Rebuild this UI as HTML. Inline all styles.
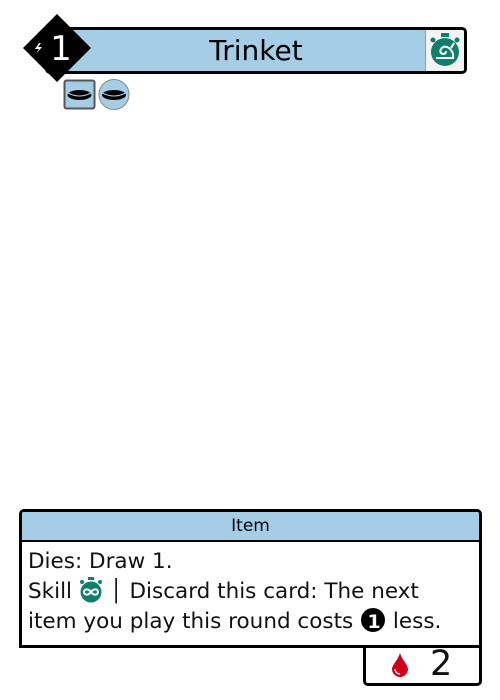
<!DOCTYPE html>
<html><head><style>
body{margin:0;width:500px;height:700px;background:#fff;position:relative;font-family:"DejaVu Sans","Liberation Sans",sans-serif;overflow:hidden}
.abs{position:absolute}
</style></head><body>
<div class="abs" style="left:45px;top:27px;width:416px;height:41px;border:3px solid #000;border-radius:5px;background:#a6cde6;overflow:hidden">
 <div class="abs" style="left:377px;top:0;width:39px;height:41px;background:#f3f3f3;border-left:1px solid #999"></div>
 <div class="abs" style="left:0;right:0;top:0;height:41px;line-height:41px;text-align:center;font-size:28px;color:#000">Trinket</div>
</div>
<svg class="abs" style="left:427px;top:32px" width="36" height="36" viewBox="0 0 36 36">
 <rect x="14" y="1" width="8" height="4" fill="#0f7f6b"/>
 <circle cx="6" cy="8" r="2.5" fill="#0f7f6b"/><circle cx="30" cy="8" r="2.5" fill="#0f7f6b"/>
 <circle cx="18" cy="20" r="14" fill="#0f7f6b"/>
 <path d="M9 26 L26 26 Q27 20 22 16 Q17 13 14 17 Q12 21 16 22 Q19 22 19 19 M24 16 L27 11" stroke="#fff" stroke-width="2" fill="none"/>
</svg>
<svg class="abs" style="left:22px;top:13px" width="70" height="70" viewBox="0 0 70 70">
 <polygon points="35,1 69,35 35,69 1,35" fill="#000"/>
 <path d="M17 30 L13 36 L17 36 L14 41 L20 34 L16 34 L19 30Z" fill="#fff"/>
 <text x="39" y="47" font-family="DejaVu Sans,sans-serif" font-size="34" fill="#fff" text-anchor="middle">1</text>
</svg>
<svg class="abs" style="left:63px;top:79px" width="70" height="32" viewBox="0 0 70 32">
 <rect x="1.5" y="1.5" width="30" height="28" rx="2" fill="#a6cde6" stroke="#555" stroke-width="2"/>
 <ellipse cx="16.5" cy="16" rx="12" ry="5" fill="#000"/><path d="M5 14 Q16.5 20 28 14" stroke="#a6cde6" fill="none"/>
 <circle cx="51" cy="15.5" r="15" fill="#a6cde6" stroke="#888" stroke-width="1"/>
 <ellipse cx="51" cy="16" rx="12" ry="5" fill="#000"/><path d="M39.5 14 Q51 20 62.5 14" stroke="#a6cde6" fill="none"/>
</svg>
<div class="abs" style="left:19px;top:509px;width:457px;height:133px;border:3px solid #000;border-radius:5px 5px 0 0;overflow:hidden">
 <div style="height:28px;background:#a6cde6;border-bottom:2px solid #000;text-align:center;line-height:28px;font-size:17px">Item</div>
 <div style="padding:5px 0 0 6px;font-size:21.5px;line-height:30px;color:#111;white-space:nowrap">Dies: Draw 1.<br>Skill <svg width="24" height="26" viewBox="0 0 24 26" style="vertical-align:-5px"><rect x="9" y="0" width="6" height="3" fill="#0f7f6b"/><circle cx="3" cy="5" r="2" fill="#0f7f6b"/><circle cx="21" cy="5" r="2" fill="#0f7f6b"/><circle cx="12" cy="15" r="10.5" fill="#0f7f6b"/><path d="M12 15 C9 11 5 12 5 15 C5 18 9 19 12 15 C15 11 19 12 19 15 C19 18 15 19 12 15Z" stroke="#fff" stroke-width="2" fill="none"/></svg> │ Discard this card: The next<br>item you play this round costs <svg width="26" height="26" viewBox="0 0 26 26" style="vertical-align:-5px"><circle cx="13" cy="13" r="12" fill="#000"/><text x="14" y="21" font-size="19" font-weight="bold" fill="#fff" text-anchor="middle" font-family="DejaVu Sans,sans-serif">1</text></svg> less.</div>
</div>
<div class="abs" style="left:363px;top:645px;width:113px;height:38px;border:3px solid #000;border-top:none;border-radius:0 0 5px 5px">
 <svg class="abs" style="left:25px;top:8px" width="18" height="24" viewBox="0 0 18 24"><path d="M9 0 C7 7 1 12 1 16 A8 8 0 0 0 17 16 C17 12 11 7 9 0Z" fill="#d0021b"/><path d="M4 16 A5 5 0 0 0 9 21" stroke="#fff" stroke-width="1.2" fill="none"/></svg>
 <div class="abs" style="left:64px;top:-1px;font-size:35px;line-height:40px;color:#111">2</div>
</div>
</body></html>
